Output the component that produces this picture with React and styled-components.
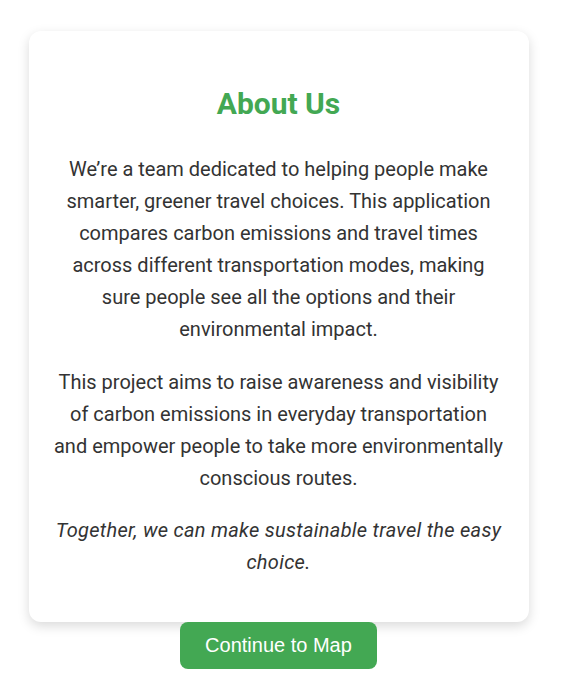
import React from "react";
import styled, { createGlobalStyle } from "styled-components";

const GlobalStyle = createGlobalStyle`
  body {
    margin: 0;
    background: #ffffff;
    font-family: Roboto, "Liberation Sans", Arial, sans-serif;
  }
`;

const Page = styled.div`
  width: 557px;
  display: flex;
  flex-direction: column;
  align-items: center;
  padding-top: 31px;
`;

const Card = styled.section`
  width: 500px;
  box-sizing: border-box;
  padding: 24px 24px 23px;
  background: #ffffff;
  border-radius: 12px;
  box-shadow: 0 4px 12px rgba(0, 0, 0, 0.15);
  text-align: center;
`;

const Title = styled.h1`
  margin: 30px 0 30px;
  font-size: 30px;
  line-height: 38px;
  font-weight: 700;
  color: #43a853;
`;

const Text = styled.p`
  margin: 0 0 20.5px;
  font-size: 20px;
  line-height: 32px;
  color: #333333;
  font-style: ${(p) => (p.$italic ? "italic" : "normal")};
  letter-spacing: ${(p) => (p.$italic ? "0.28px" : "normal")};
`;

const Button = styled.button`
  width: 197px;
  height: 47px;
  border: none;
  border-radius: 8px;
  background: #43a853;
  color: #ffffff;
  font-family: "Liberation Sans", Arial, sans-serif;
  font-size: 20px;
  cursor: pointer;
`;

export default function App() {
  return (
    <>
      <GlobalStyle />
      <Page>
        <Card>
          <Title>About Us</Title>
          <Text>
            We’re a team dedicated to helping people make smarter, greener
            travel choices. This application compares carbon emissions and
            travel times across different transportation modes, making sure
            people see all the options and their environmental impact.
          </Text>
          <Text>
            This project aims to raise awareness and visibility of carbon
            emissions in everyday transportation and empower people to take
            more environmentally conscious routes.
          </Text>
          <Text $italic>
            Together, we can make sustainable travel the easy choice.
          </Text>
        </Card>
        <Button>Continue to Map</Button>
      </Page>
    </>
  );
}
